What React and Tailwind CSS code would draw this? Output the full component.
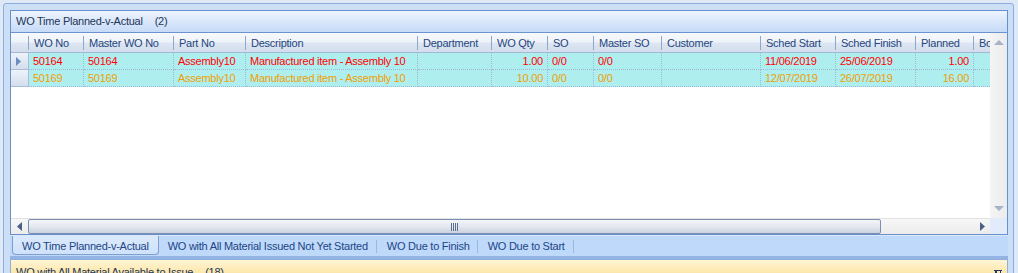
import React from "react";

const cols = [
  { key: "wo", label: "WO No", w: 55 },
  { key: "mwo", label: "Master WO No", w: 90 },
  { key: "part", label: "Part No", w: 72 },
  { key: "desc", label: "Description", w: 172 },
  { key: "dept", label: "Department", w: 74 },
  { key: "qty", label: "WO Qty", w: 56, right: true },
  { key: "so", label: "SO", w: 46 },
  { key: "mso", label: "Master SO", w: 68 },
  { key: "cust", label: "Customer", w: 99 },
  { key: "ss", label: "Sched Start", w: 75 },
  { key: "sf", label: "Sched Finish", w: 80 },
  { key: "pl", label: "Planned", w: 58, right: true },
  { key: "bo", label: "Bo", w: 60 },
];

const rows = [
  {
    color: "text-[#ff0000]",
    current: true,
    d: { wo: "50164", mwo: "50164", part: "Assembly10", desc: "Manufactured item - Assembly 10", dept: "", qty: "1.00", so: "0/0", mso: "0/0", cust: "", ss: "11/06/2019", sf: "25/06/2019", pl: "1.00", bo: "" },
  },
  {
    color: "text-[#f0a000]",
    current: false,
    d: { wo: "50169", mwo: "50169", part: "Assembly10", desc: "Manufactured item - Assembly 10", dept: "", qty: "10.00", so: "0/0", mso: "0/0", cust: "", ss: "12/07/2019", sf: "26/07/2019", pl: "16.00", bo: "" },
  },
];

const font = "font-['Liberation_Sans',Arial,sans-serif] text-[11px] tracking-[-0.25px]";

function HeaderCell({ col }) {
  return (
    <div className="flex shrink-0 items-center h-full" style={{ width: col.w }}>
      <div className="flex-1 pl-[5px] pt-[2px] whitespace-nowrap overflow-hidden text-[#1f4680]">{col.label}</div>
      <div className="w-px h-[14px] mt-[1px] bg-[#8ea8cb] shrink-0" />
    </div>
  );
}

function Row({ row }) {
  return (
    <div className="flex h-[17px] shrink-0">
      <div className="w-[18px] shrink-0 h-full border-r border-b border-[#aabdd8] bg-[linear-gradient(to_bottom,#eef3fa,#d3deed)] flex items-center pl-[5px]">
        {row.current && (
          <svg width="5" height="9" viewBox="0 0 5 9">
            <path d="M0 0 L5 4.5 L0 9 Z" fill="#6d8cbf" />
          </svg>
        )}
      </div>
      {cols.map((c) => (
        <div
          key={c.key}
          className={`shrink-0 h-full bg-[#afeeee] border-r border-b border-dotted border-[#9fb8d6] flex items-center whitespace-nowrap overflow-hidden ${row.color} ${c.right ? "justify-end pr-[4px]" : "pl-[4px]"}`}
          style={{ width: c.w }}
        >
          {row.d[c.key]}
        </div>
      ))}
    </div>
  );
}

export default function App() {
  return (
    <div className={`w-[1018px] h-[273px] overflow-hidden bg-[#dfe8f5] pt-[3px] pl-[3px] ${font}`}>
      <div className="w-[1011px] h-[280px] border border-[#8cadde] rounded-t-[3px] bg-[#cddff6] pl-[6px] pr-[5px] pt-[6px] flex flex-col">
        {/* Group panel */}
        <div className="border-x border-t border-[#6591cd] flex flex-col bg-white">
          <div className="h-[22px] border-b border-[#6b93cf] bg-[linear-gradient(to_bottom,#eef5fe,#dde9fb_40%,#c6dbf8)] flex items-center pl-[5px] text-[#1c3557]">
            <span>WO Time Planned-v-Actual</span>
            <span className="ml-[12px]">(2)</span>
          </div>
          {/* grid */}
          <div className="flex flex-col">
            <div className="flex h-[185px]">
              <div className="w-[979px] overflow-hidden flex flex-col">
                <div className="flex h-[20px] shrink-0 border-b border-[#a5b9d4] bg-[linear-gradient(to_bottom,#f7f9fc_0%,#eef3f9_48%,#dde6f2_52%,#d3ddeb_100%)]">
                  <div className="w-[18px] shrink-0 h-full flex items-center justify-end">
                    <div className="w-px h-[14px] mt-[1px] bg-[#8ea8cb]" />
                  </div>
                  {cols.map((c) => (
                    <HeaderCell key={c.key} col={c} />
                  ))}
                </div>
                {rows.map((r, i) => (
                  <Row key={i} row={r} />
                ))}
                <div className="flex-1 bg-white" />
              </div>
              {/* vertical scrollbar */}
              <div className="w-[17px] shrink-0 bg-[linear-gradient(to_right,#f4f4f4,#ececec)] flex flex-col items-center justify-between py-[7px]">
                <svg width="10" height="5" viewBox="0 0 10 5">
                  <path d="M0 5 L5 0 L10 5 Z" fill="#a6b3c9" />
                </svg>
                <svg width="10" height="5" viewBox="0 0 10 5">
                  <path d="M0 0 L10 0 L5 5 Z" fill="#a6b3c9" />
                </svg>
              </div>
            </div>
            <div className="flex h-[17px] border-b border-[#6b8fc9]">
              <div className="w-[979px] shrink-0 bg-[linear-gradient(to_bottom,#f7f7f7,#ebebeb)] border-t border-[#e2e2e2] flex items-center">
                <div className="w-[17px] flex justify-center">
                  <svg width="5" height="9" viewBox="0 0 5 9">
                    <path d="M5 0 L0 4.5 L5 9 Z" fill="#4c5f84" />
                  </svg>
                </div>
                <div className="w-[853px] h-[15px] rounded-[2px] border border-[#7b8fb2] bg-[linear-gradient(to_bottom,#f3f5f9,#e4e8ef_50%,#cbd3df)] flex items-center justify-center">
                  <div className="flex gap-px h-[8px]">
                    <div className="w-px bg-[#5f6f8a]" />
                    <div className="w-px bg-[#5f6f8a]" />
                    <div className="w-px bg-[#5f6f8a]" />
                    <div className="w-px bg-[#5f6f8a]" />
                  </div>
                </div>
                <div className="flex-1 flex justify-end pr-[5px]">
                  <svg width="5" height="9" viewBox="0 0 5 9">
                    <path d="M0 0 L5 4.5 L0 9 Z" fill="#4c5f84" />
                  </svg>
                </div>
              </div>
              <div className="flex-1 bg-[#e1ebfa]" />
            </div>
          </div>
        </div>
        {/* tab strip */}
        <div className="h-[21px] bg-[#bfd9fb] border-t border-[#dbe8fb] flex items-start text-[#1c4585] pl-[2px]">
          <div className="h-[19px] pt-[2px] px-[9px] flex items-center border-x border-b border-[#7e9fd0] rounded-b-[4px] bg-[linear-gradient(to_bottom,#dbe9fc,#cfe2fa)]">
            WO Time Planned-v-Actual
          </div>
          <div className="h-[19px] pt-[2px] flex items-center pl-[9px]">
            WO with All Material Issued Not Yet Started
            <div className="ml-[8px] w-px h-[13px] bg-[#9cb8e0]" />
          </div>
          <div className="h-[19px] pt-[2px] flex items-center pl-[10px]">
            WO Due to Finish
            <div className="ml-[7px] w-px h-[13px] bg-[#9cb8e0]" />
          </div>
          <div className="h-[19px] pt-[2px] flex items-center pl-[10px]">
            WO Due to Start
            <div className="ml-[8px] w-px h-[13px] bg-[#9cb8e0]" />
          </div>
        </div>
        <div className="h-[3px] bg-[#93b4e3]" />
        {/* next panel header */}
        <div className="h-[22px] pt-[4px] border-x border-t border-[#8fb0dc] bg-[linear-gradient(to_bottom,#fff5d6,#fde9b2_50%,#fbdc90)] flex items-center pl-[5px] pr-[5px] text-[#1c3557]">
          <span>WO with All Material Available to Issue</span>
          <span className="ml-[12px]">(18)</span>
          <div className="flex-1" />
          <svg width="8" height="10" viewBox="0 0 8 10" className="mt-[4px]">
            <path d="M0 0.5 H8 M1.5 0.5 V8 M6.5 0.5 V8 M2.5 0.5 V8" stroke="#1c3a6b" strokeWidth="1" fill="none" />
          </svg>
        </div>
      </div>
    </div>
  );
}
